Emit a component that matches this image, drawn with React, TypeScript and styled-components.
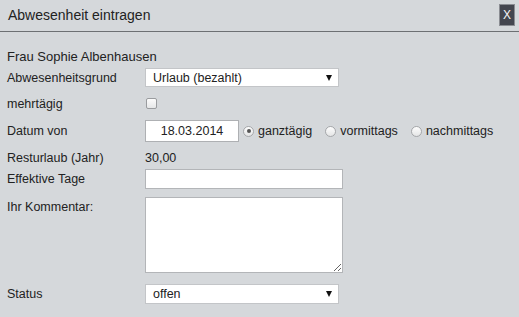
import styled, { createGlobalStyle } from 'styled-components';

const GlobalStyle = createGlobalStyle`
    html, body {
        margin: 0;
        padding: 0;
        background: #d5d8db;
    }
    body {
        font-family: "Liberation Sans", Arial, sans-serif;
        color: #222;
    }
`;

export default function App() {
    return (
        <>
            <GlobalStyle />
            <Dialog>
                <Header>
                    <Title>Abwesenheit eintragen</Title>
                    <CloseButton type="button">X</CloseButton>
                </Header>
                <Form>
                    <NameRow>Frau Sophie Albenhausen</NameRow>

                    <Row $top={2} $height={19}>
                        <Label>Abwesenheitsgrund</Label>
                        <SelectBox $width={194}>
                            <span>Urlaub (bezahlt)</span>
                            <Arrow />
                        </SelectBox>
                    </Row>

                    <Row $top={9} $height={16}>
                        <Label>mehrtägig</Label>
                        <Checkbox />
                    </Row>

                    <Row $top={8} $height={22}>
                        <Label>Datum von</Label>
                        <DateInput readOnly value="18.03.2014" />
                        <RadioGroup>
                            <RadioOption>
                                <Radio $checked />
                                ganztägig
                            </RadioOption>
                            <RadioOption>
                                <Radio />
                                vormittags
                            </RadioOption>
                            <RadioOption>
                                <Radio />
                                nachmittags
                            </RadioOption>
                        </RadioGroup>
                    </Row>

                    <Row $top={9} $height={14}>
                        <Label>Resturlaub (Jahr)</Label>
                        <Value>30,00</Value>
                    </Row>

                    <Row $top={4} $height={20}>
                        <Label>Effektive Tage</Label>
                        <TextInput readOnly value="" />
                    </Row>

                    <Row $top={8} $height={76} $alignTop>
                        <Label $padTop={3}>Ihr Kommentar:</Label>
                        <Comment />
                    </Row>

                    <Row $top={11} $height={20}>
                        <Label>Status</Label>
                        <SelectBox $width={194}>
                            <span>offen</span>
                            <Arrow />
                        </SelectBox>
                    </Row>
                </Form>
            </Dialog>
        </>
    );
}

const Dialog = styled.div`
    width: 519px;
    height: 317px;
    background: #d5d8db;
    overflow: hidden;
`;

const Header = styled.div`
    display: flex;
    align-items: center;
    justify-content: space-between;
    box-sizing: border-box;
    height: 32px;
    padding: 0 4px 0 8px;
    border-bottom: 1px solid #6d7073;
`;

const Title = styled.div`
    font-size: 14px;
    color: #222;
    margin-top: -1px;
`;

const CloseButton = styled.button`
    width: 16px;
    height: 22px;
    padding: 0;
    margin-top: -1px;
    background: #44464f;
    border: 1px solid #8a8c92;
    color: #f4f4f4;
    font-family: "Liberation Sans", Arial, sans-serif;
    font-size: 12px;
    line-height: 20px;
    text-align: center;
`;

const Form = styled.div`
    display: flex;
    flex-direction: column;
    padding: 16px 0 0 7px;
`;

const NameRow = styled.div`
    height: 18px;
    line-height: 18px;
    font-size: 13px;
    color: #222;
`;

const Row = styled.div<{ $top: number; $height: number; $alignTop?: boolean }>`
    display: flex;
    align-items: ${p => (p.$alignTop ? 'flex-start' : 'center')};
    height: ${p => p.$height}px;
    margin-top: ${p => p.$top}px;
`;

const Label = styled.div<{ $padTop?: number }>`
    width: 138px;
    flex-shrink: 0;
    font-size: 12.5px;
    line-height: 14px;
    color: #222;
    padding-top: ${p => p.$padTop ?? 0}px;
`;

const Value = styled.div`
    font-size: 12.5px;
    line-height: 14px;
    color: #222;
`;

const SelectBox = styled.div<{ $width: number }>`
    display: flex;
    align-items: center;
    justify-content: space-between;
    box-sizing: border-box;
    width: ${p => p.$width}px;
    height: 100%;
    padding: 0 6px 0 7px;
    background: #fff;
    border: 1px solid #c3c5c8;
    font-size: 12.5px;
    color: #222;
`;

const Arrow = styled.span`
    width: 0;
    height: 0;
    border-left: 3.5px solid transparent;
    border-right: 3.5px solid transparent;
    border-top: 6px solid #111;
`;

const Checkbox = styled.span`
    box-sizing: border-box;
    width: 11px;
    height: 11px;
    margin-left: 1px;
    margin-top: -1px;
    border: 1px solid #9a9c9f;
    border-radius: 2px;
    background: linear-gradient(#fcfcfc, #e6e7e8);
`;

const DateInput = styled.input`
    box-sizing: border-box;
    width: 94px;
    height: 22px;
    padding: 0;
    border: 1px solid #aeb0b3;
    background: #fff;
    font-family: "Liberation Sans", Arial, sans-serif;
    font-size: 12.5px;
    color: #222;
    text-align: center;
    outline: none;
`;

const RadioGroup = styled.div`
    display: flex;
    align-items: center;
    gap: 13px;
    margin-left: 4px;
`;

const RadioOption = styled.label`
    display: flex;
    align-items: center;
    gap: 4px;
    font-size: 12.5px;
    color: #222;
`;

const Radio = styled.span<{ $checked?: boolean }>`
    position: relative;
    box-sizing: border-box;
    width: 11px;
    height: 11px;
    border-radius: 50%;
    border: 1px solid #a5a7aa;
    background: linear-gradient(#fdfdfd, #e4e5e6);

    &::after {
        content: '';
        display: ${p => (p.$checked ? 'block' : 'none')};
        position: absolute;
        left: 2.5px;
        top: 2.5px;
        width: 4px;
        height: 4px;
        border-radius: 50%;
        background: #555;
    }
`;

const TextInput = styled.input`
    box-sizing: border-box;
    width: 198px;
    height: 20px;
    border: 1px solid #b3b5b8;
    background: #fff;
    outline: none;
`;

const Comment = styled.textarea`
    box-sizing: border-box;
    width: 198px;
    height: 76px;
    border: 1px solid #b3b5b8;
    background: #fff;
    resize: both;
    outline: none;
`;
